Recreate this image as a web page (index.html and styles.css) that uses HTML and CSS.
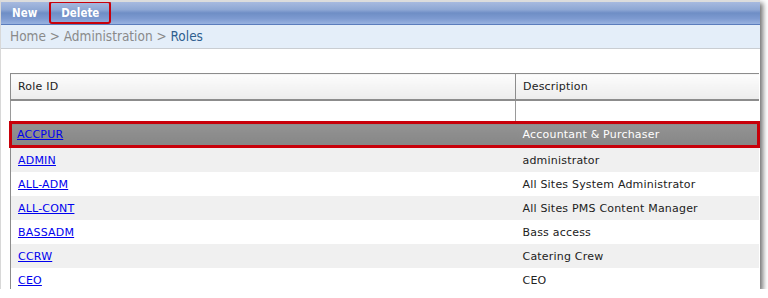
FILE: index.html
```html
<!DOCTYPE html>
<html lang="en">
<head>
    <meta charset="UTF-8">
    <title>Roles</title>
    <link rel="stylesheet" href="styles.css">
</head>
<body>
    <div class="window">
        <!-- toolbar -->
        <div class="toolbar">
            <span class="tool">New</span>
            <span class="tool tool-marked">Delete</span>
        </div>

        <!-- breadcrumb -->
        <div class="crumbs">
            Home &gt; Administration &gt; <span class="crumb-current">Roles</span>
        </div>

        <div class="content">
            <table class="grid">
                <thead>
                    <tr>
                        <th class="col-id">Role ID</th>
                        <th>Description</th>
                    </tr>
                </thead>
                <tbody>
                    <tr class="filter-row"><td></td><td></td></tr>
                    <tr class="selected"><td><a href="#">ACCPUR</a></td><td>Accountant &amp; Purchaser</td></tr>
                    <tr class="alt"><td><a href="#">ADMIN</a></td><td>administrator</td></tr>
                    <tr><td><a href="#">ALL-ADM</a></td><td>All Sites System Administrator</td></tr>
                    <tr class="alt"><td><a href="#">ALL-CONT</a></td><td>All Sites PMS Content Manager</td></tr>
                    <tr><td><a href="#">BASSADM</a></td><td>Bass access</td></tr>
                    <tr class="alt"><td><a href="#">CCRW</a></td><td>Catering Crew</td></tr>
                    <tr><td><a href="#">CEO</a></td><td>CEO</td></tr>
                </tbody>
            </table>
        </div>
    </div>
</body>
</html>
```

FILE: styles.css
```css
body {
    margin: 0;
    background: #fff;
    font-family: "DejaVu Sans", Verdana, sans-serif;
}
.window {
    width: 760px;
    height: 289px;
    overflow: hidden;
    background: #fff;
    border-top: 2px solid #dcdcdc;
    border-left: 1px solid #d8d8d8;
    box-sizing: border-box;
    box-shadow: 3px 3px 5px rgba(0, 0, 0, 0.55);
}
.toolbar {
    height: 22px;
    display: flex;
    align-items: stretch;
    padding-left: 4px;
    background: linear-gradient(#a7badf 0%, #8ea7d4 35%, #6f8ec5 50%, #7d9ad0 75%, #98b2e0 100%);
    border-bottom: 1px solid #5b7dbd;
}
.tool {
    display: flex;
    align-items: center;
    padding: 0 7px;
    margin-right: 5px;
    color: #fff;
    font-family: "DejaVu Sans Condensed", "DejaVu Sans", sans-serif;
    font-weight: bold;
    font-size: 11.5px;
}
.tool-marked {
    border: 2px solid #c8000a;
    border-radius: 3px;
    padding: 0 10px;
    margin-top: -1px;
}
.crumbs {
    height: 23px;
    line-height: 22px;
    padding-left: 9px;
    background: #e4eef9;
    border-bottom: 1px solid #c9cdd2;
    color: #8a8a8a;
    font-family: "DejaVu Sans Condensed", "DejaVu Sans", sans-serif;
    font-size: 13.5px;
}
.crumb-current {
    color: #2f5f8f;
}
.content {
    padding: 24px 0 0 8px;
}
.grid {
    border-collapse: collapse;
    width: 751px;
    font-size: 11px;
    color: #222;
    letter-spacing: 0.2px;
}
.grid th {
    height: 25px;
    padding: 0 7px;
    text-align: left;
    font-weight: normal;
    background: linear-gradient(#fdfdfd, #ececec);
    border-top: 1px solid #8c8c8c;
    border-bottom: 2px solid #8c8c8c;
    border-left: 1px solid #8c8c8c;
}
.grid .col-id {
    width: 490px;
}
.grid td {
    height: 24px;
    padding: 0 7px;
    border-left: 1px solid #8c8c8c;
}
.grid td + td {
    border-left: none;
    padding-left: 7px;
}
.filter-row td {
    height: 20px;
    border-left: 1px solid #9a9a9a !important;
}
.grid tr.alt td {
    background: #f0f0f0;
}
.grid a {
    color: #0000ee;
}
.selected td {
    height: 21px;
    background: linear-gradient(#939393, #868686);
    color: #fff;
    border-top: 3px solid #c8000a;
    border-bottom: 3px solid #c8000a;
}
.selected td:first-child {
    border-left: 3px solid #c8000a;
    padding-left: 5px;
}
.selected td:last-child {
    border-right: 3px solid #c8000a;
}
```
